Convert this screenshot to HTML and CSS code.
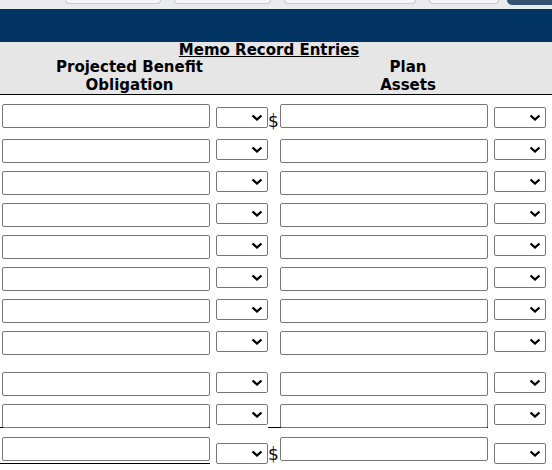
FILE: index.html
```html
<!DOCTYPE html>
<html lang="en">
<head>
<meta charset="utf-8">
<title>Memo Record Entries</title>
<link rel="stylesheet" href="styles.css">
</head>
<body>
<div class="topbar">
  <span class="tab t1"></span>
  <span class="tab t2"></span>
  <span class="tab t3"></span>
  <span class="tab t4"></span>
  <span class="tab t5"></span>
</div>
<div class="band"></div>
<div class="head">
  <div class="title"><span class="u">Memo Record Entries</span></div>
  <div class="cols">
    <div class="colh left">Projected Benefit<br>Obligation</div>
    <div class="colh right">Plan<br>Assets</div>
  </div>
</div>
<div class="rows">
  <div class="row r1">
    <div class="c-in"><input class="txt" type="text"></div>
    <div class="c-sel"><select class="sel"><option></option></select><svg class="chev" viewBox="0 0 12 7"><polyline points="1.5,1.5 6,5.5 10.5,1.5"/></svg></div>
    <div class="c-in2"><span class="cur">$</span><input class="txt" type="text"></div>
    <div class="c-sel"><select class="sel"><option></option></select><svg class="chev" viewBox="0 0 12 7"><polyline points="1.5,1.5 6,5.5 10.5,1.5"/></svg></div>
  </div>
  <div class="row">
    <div class="c-in"><input class="txt" type="text"></div>
    <div class="c-sel"><select class="sel"><option></option></select><svg class="chev" viewBox="0 0 12 7"><polyline points="1.5,1.5 6,5.5 10.5,1.5"/></svg></div>
    <div class="c-in2"><span class="cur"></span><input class="txt" type="text"></div>
    <div class="c-sel"><select class="sel"><option></option></select><svg class="chev" viewBox="0 0 12 7"><polyline points="1.5,1.5 6,5.5 10.5,1.5"/></svg></div>
  </div>
  <div class="row">
    <div class="c-in"><input class="txt" type="text"></div>
    <div class="c-sel"><select class="sel"><option></option></select><svg class="chev" viewBox="0 0 12 7"><polyline points="1.5,1.5 6,5.5 10.5,1.5"/></svg></div>
    <div class="c-in2"><span class="cur"></span><input class="txt" type="text"></div>
    <div class="c-sel"><select class="sel"><option></option></select><svg class="chev" viewBox="0 0 12 7"><polyline points="1.5,1.5 6,5.5 10.5,1.5"/></svg></div>
  </div>
  <div class="row">
    <div class="c-in"><input class="txt" type="text"></div>
    <div class="c-sel"><select class="sel"><option></option></select><svg class="chev" viewBox="0 0 12 7"><polyline points="1.5,1.5 6,5.5 10.5,1.5"/></svg></div>
    <div class="c-in2"><span class="cur"></span><input class="txt" type="text"></div>
    <div class="c-sel"><select class="sel"><option></option></select><svg class="chev" viewBox="0 0 12 7"><polyline points="1.5,1.5 6,5.5 10.5,1.5"/></svg></div>
  </div>
  <div class="row">
    <div class="c-in"><input class="txt" type="text"></div>
    <div class="c-sel"><select class="sel"><option></option></select><svg class="chev" viewBox="0 0 12 7"><polyline points="1.5,1.5 6,5.5 10.5,1.5"/></svg></div>
    <div class="c-in2"><span class="cur"></span><input class="txt" type="text"></div>
    <div class="c-sel"><select class="sel"><option></option></select><svg class="chev" viewBox="0 0 12 7"><polyline points="1.5,1.5 6,5.5 10.5,1.5"/></svg></div>
  </div>
  <div class="row">
    <div class="c-in"><input class="txt" type="text"></div>
    <div class="c-sel"><select class="sel"><option></option></select><svg class="chev" viewBox="0 0 12 7"><polyline points="1.5,1.5 6,5.5 10.5,1.5"/></svg></div>
    <div class="c-in2"><span class="cur"></span><input class="txt" type="text"></div>
    <div class="c-sel"><select class="sel"><option></option></select><svg class="chev" viewBox="0 0 12 7"><polyline points="1.5,1.5 6,5.5 10.5,1.5"/></svg></div>
  </div>
  <div class="row">
    <div class="c-in"><input class="txt" type="text"></div>
    <div class="c-sel"><select class="sel"><option></option></select><svg class="chev" viewBox="0 0 12 7"><polyline points="1.5,1.5 6,5.5 10.5,1.5"/></svg></div>
    <div class="c-in2"><span class="cur"></span><input class="txt" type="text"></div>
    <div class="c-sel"><select class="sel"><option></option></select><svg class="chev" viewBox="0 0 12 7"><polyline points="1.5,1.5 6,5.5 10.5,1.5"/></svg></div>
  </div>
  <div class="row">
    <div class="c-in"><input class="txt" type="text"></div>
    <div class="c-sel"><select class="sel"><option></option></select><svg class="chev" viewBox="0 0 12 7"><polyline points="1.5,1.5 6,5.5 10.5,1.5"/></svg></div>
    <div class="c-in2"><span class="cur"></span><input class="txt" type="text"></div>
    <div class="c-sel"><select class="sel"><option></option></select><svg class="chev" viewBox="0 0 12 7"><polyline points="1.5,1.5 6,5.5 10.5,1.5"/></svg></div>
  </div>
  <div class="row r9">
    <div class="c-in"><input class="txt" type="text"></div>
    <div class="c-sel"><select class="sel"><option></option></select><svg class="chev" viewBox="0 0 12 7"><polyline points="1.5,1.5 6,5.5 10.5,1.5"/></svg></div>
    <div class="c-in2"><span class="cur"></span><input class="txt" type="text"></div>
    <div class="c-sel"><select class="sel"><option></option></select><svg class="chev" viewBox="0 0 12 7"><polyline points="1.5,1.5 6,5.5 10.5,1.5"/></svg></div>
  </div>
  <div class="row r10">
    <div class="c-in"><input class="txt" type="text"></div>
    <div class="c-sel"><select class="sel"><option></option></select><svg class="chev" viewBox="0 0 12 7"><polyline points="1.5,1.5 6,5.5 10.5,1.5"/></svg></div>
    <div class="c-in2"><span class="cur"></span><input class="txt" type="text"></div>
    <div class="c-sel"><select class="sel"><option></option></select><svg class="chev" viewBox="0 0 12 7"><polyline points="1.5,1.5 6,5.5 10.5,1.5"/></svg></div>
  </div>
  <div class="row r11">
    <div class="c-in"><input class="txt" type="text"></div>
    <div class="c-sel"><select class="sel"><option></option></select><svg class="chev" viewBox="0 0 12 7"><polyline points="1.5,1.5 6,5.5 10.5,1.5"/></svg></div>
    <div class="c-in2"><span class="cur">$</span><input class="txt" type="text"></div>
    <div class="c-sel"><select class="sel"><option></option></select><svg class="chev" viewBox="0 0 12 7"><polyline points="1.5,1.5 6,5.5 10.5,1.5"/></svg></div>
  </div>
</div>
</body>
</html>
```
FILE: styles.css
```css
html, body {
  margin: 0;
  padding: 0;
  background: #fff;
  overflow: hidden;
}
body {
  width: 552px;
  font-family: "DejaVu Sans", Verdana, sans-serif;
  color: #000;
}

/* top strip with cut-off tab buttons */
.topbar {
  height: 9px;
  background: #e9ebee;
  display: flex;
  align-items: flex-start;
  gap: 13px;
  padding-left: 65px;
  overflow: hidden;
}
.tab {
  display: block;
  height: 4px;
  box-sizing: border-box;
  background: #f5f6f8;
  border: 1px solid #c6cbd1;
  border-top: none;
  border-radius: 0 0 5px 5px;
  flex: none;
}
.t1 { width: 96px; }
.t2 { width: 97px; }
.t3 { width: 132px; }
.t4 { width: 70px; }
.t5 {
  width: 60px;
  height: 5px;
  margin-left: -5px;
  background: #34516f;
  border-color: #34516f;
  border-radius: 0 0 0 5px;
}

.band {
  height: 33px;
  background: #013462;
}

.head {
  background: #e6e6e6;
  height: 52px;
  border-bottom: 1px solid #000;
  font-weight: bold;
  font-size: 15px;
  line-height: 17.4px;
}
.title {
  width: 538px;
  text-align: center;
}
.u {
  text-decoration: underline;
}
.cols {
  display: flex;
}
.colh {
  text-align: center;
}
.left {
  width: 259px;
}
.right {
  width: 280px;
  margin-left: 9px;
}

/* entry rows */
.row {
  display: flex;
  align-items: flex-start;
  height: 32px;
  padding-top: 4px;
  box-sizing: border-box;
}
.r1 {
  height: 40px;
  padding-top: 9px;
}
.r9 {
  margin-top: 9px;
}
.r10 {
  height: 33px;
}

.c-in {
  width: 210px;
  padding-left: 2px;
  box-sizing: border-box;
}
.c-in2 {
  width: 220px;
  display: flex;
  align-items: flex-start;
}
.cur {
  width: 12px;
  flex: none;
  font-size: 17px;
  line-height: 18px;
  margin-top: 8px;
  color: #0a0a14;
}
.txt {
  display: block;
  width: 208px;
  height: 24px;
  margin: 0;
  padding: 0 3px;
  box-sizing: border-box;
  border: 1px solid #767676;
  border-radius: 2px;
  background: #fff;
  font: 13px "DejaVu Sans", sans-serif;
}

.c-sel {
  position: relative;
  width: 52px;
  height: 21px;
  margin-left: 6px;
  flex: none;
}
.sel {
  display: block;
  width: 52px;
  height: 21px;
  margin: 0;
  padding: 0;
  box-sizing: border-box;
  -webkit-appearance: none;
  appearance: none;
  border: 1px solid #767676;
  border-radius: 2px;
  background: #fff;
  font: 13px "DejaVu Sans", sans-serif;
}
.chev {
  position: absolute;
  right: 5px;
  top: 7px;
  width: 12px;
  height: 7px;
  pointer-events: none;
}
.chev polyline {
  fill: none;
  stroke: #000;
  stroke-width: 2.3;
}

.r1 .c-sel {
  margin-top: 3px;
}
.r11 .c-sel {
  margin-top: 6px;
}

.r10 .c-in,
.r10 .c-in2 {
  border-bottom: 1px solid #000;
}
.r10 .txt {
  margin-bottom: -1px;
}
.r11 .c-in,
.r11 .c-in2 {
  padding-bottom: 2px;
  border-bottom: 3px double #000;
}
```
